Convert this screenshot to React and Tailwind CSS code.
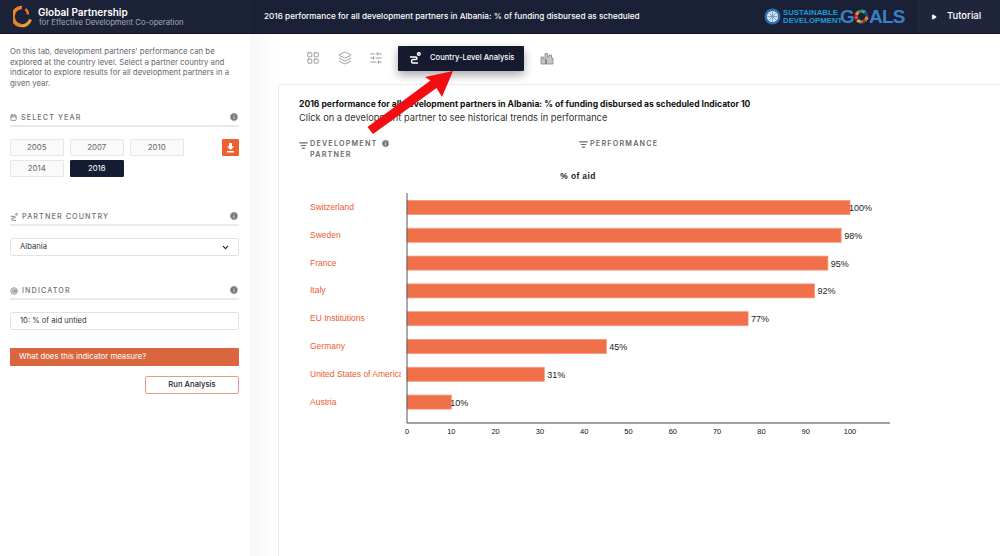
import { ChevronDown, Info, Play, Calendar, LayoutGrid, Layers, SlidersHorizontal, Target, ListFilter } from "lucide-react";

const font = { fontFamily: "Inter, 'Liberation Sans', sans-serif" };

const bars = [
  { name: "Switzerland", value: 100, label: "100%" },
  { name: "Sweden", value: 98, label: "98%" },
  { name: "France", value: 95, label: "95%" },
  { name: "Italy", value: 92, label: "92%" },
  { name: "EU Institutions", value: 77, label: "77%" },
  { name: "Germany", value: 45, label: "45%" },
  { name: "United States of America", value: 31, label: "31%" },
  { name: "Austria", value: 10, label: "10%" },
];

const ringColors = ["#e5243b", "#dda63a", "#4c9f38", "#c5192d", "#ff3a21", "#26bde2", "#fcc30b", "#a21942", "#fd6925", "#dd1367", "#fd9d24", "#bf8b2e", "#3f7e44", "#0a97d9", "#56c02b", "#00689d", "#19486a"];

function RouteIcon({ size, width = 1.5 }) {
  return (
    <svg width={size} height={size} viewBox="0 0 12 12" fill="none" stroke="currentColor" strokeWidth={width} className="shrink-0">
      <circle cx="9.8" cy="2" r="1.3" />
      <path d="M1 5 H6.5 C8.5 5 8.5 7.5 6.5 7.5 H4 C2 7.5 2 11 4 11 H9" />
    </svg>
  );
}

function SectionHead({ icon, title }) {
  return (
    <div className="flex items-center justify-between border-b-2 border-[#e8e9ec] h-[18px] pb-[1px]">
      <div className="flex items-center gap-[4px] text-[7.2px] font-medium tracking-[1.1px] text-[#6f7177] mt-[3px]">
        {icon}
        <span>{title}</span>
      </div>
      <Info size={10} fill="#777" stroke="#fff" strokeWidth={2} />
    </div>
  );
}

function YearBtn({ year, active }) {
  return (
    <button
      className={`h-[17px] w-[53.5px] rounded-[1px] text-[7.8px] ${
        active ? "bg-[#151d33] text-white border border-[#151d33]" : "bg-[#fafafa] text-[#666] border border-[#e6e6e6]"
      }`}
    >
      {year}
    </button>
  );
}

function Logo() {
  return (
    <svg width="20" height="24" viewBox="0 0 20 24" fill="none" className="shrink-0">
      <path d="M9 2.5 A8.5 9 0 0 0 8 20.5" stroke="#ee8226" strokeWidth="3.6" />
      <path d="M8 20.5 A8.5 9 0 0 0 17.5 14.5" stroke="#f0a030" strokeWidth="3" />
      <path d="M12.5 4 A6.5 7 0 0 1 15 9.5" stroke="#e8772e" strokeWidth="2.4" />
    </svg>
  );
}

function SdgLogo() {
  return (
    <div className="flex items-center" style={{ fontFamily: "'Liberation Sans', sans-serif" }}>
      <svg width="17" height="17" viewBox="0 0 17 17" className="shrink-0">
        <circle cx="8.5" cy="8.5" r="8" fill="#2f6fae" />
        <circle cx="8.5" cy="8.5" r="5.6" fill="#d5e4f2" />
        <path d="M8.5 3.5v10M3.5 8.5h10M5 5l7 7M12 5l-7 7" stroke="#5f93c4" strokeWidth="0.8" />
      </svg>
      <div className="text-[7.8px] leading-[7.5px] font-bold ml-[2px] w-[57px] whitespace-nowrap text-[#1e9ad6]">
        <div>SUSTAINABLE</div>
        <div>DEVELOPMENT</div>
      </div>
      <div className="flex items-center text-[19px] font-bold leading-none tracking-[-0.8px] text-[#3a7fc4] whitespace-nowrap w-[62px]">
        <span>G</span>
        <svg width="15" height="15" viewBox="0 0 30 30" className="shrink-0">
          {ringColors.map((c, i) => {
            const a = (i / ringColors.length) * Math.PI * 2;
            return (
              <line
                key={i}
                x1={15 + Math.cos(a) * 7.5}
                y1={15 + Math.sin(a) * 7.5}
                x2={15 + Math.cos(a) * 14}
                y2={15 + Math.sin(a) * 14}
                stroke={c}
                strokeWidth="4.4"
              />
            );
          })}
        </svg>
        <span>ALS</span>
      </div>
    </div>
  );
}

function Chart() {
  const x0 = 109;
  const scale = 4.43;
  return (
    <svg width="610" height="255" viewBox="0 0 610 255" className="block" style={{ fontFamily: "'Liberation Sans', Arial, sans-serif" }}>
      {bars.map((b, i) => {
        const cy = 22 + i * 27.8;
        return (
          <g key={b.name}>
            <text x="12" y={cy + 3} fontSize="8.5" fill="#ee5a32">{b.name}</text>
            <rect x={x0} y={cy - 6.5} width={b.value * scale} height="14" fill="#f0704a" stroke="#f5987c" strokeWidth="0.8" />
            <text
              x={x0 + b.value * scale + (b.value === 100 || b.value === 10 ? -1 : 3)}
              y={cy + 4}
              fontSize="9"
              fill="#222"
            >
              {b.label}
            </text>
          </g>
        );
      })}
      <rect x="103" y="0" width="5" height="245" fill="#fff" />
      <line x1={x0} y1="8" x2={x0} y2="238" stroke="#555" strokeWidth="1" />
      <line x1={x0} y1="238" x2="592" y2="238" stroke="#444" strokeWidth="1" />
      {[0, 10, 20, 30, 40, 50, 60, 70, 80, 90, 100].map((t) => (
        <text key={t} x={x0 + t * scale} y="249" fontSize="7.5" fill="#111" textAnchor="middle">{t}</text>
      ))}
    </svg>
  );
}

export default function App() {
  return (
    <div className="relative h-[556px] w-[1000px] overflow-hidden bg-white flex flex-col" style={font}>
      <header className="h-[34px] shrink-0 flex items-center bg-[#1a2035] border-b border-[#10141f] text-white">
        <div className="w-[250px] shrink-0 flex items-center pl-[13px] gap-[5px] bg-[#1c2339] h-full">
          <Logo />
          <div className="-mt-[1px]">
            <div className="text-[10px] font-semibold leading-[12px]">Global Partnership</div>
            <div className="text-[7.7px] leading-[9px] text-[#a6a9b4] ml-[1px] whitespace-nowrap">for Effective Development Co-operation</div>
          </div>
        </div>
        <div className="flex-1 pl-[14px] text-[8.2px] font-medium whitespace-nowrap">
          2016 performance for all development partners in Albania: % of funding disbursed as scheduled
        </div>
        <div className="mr-[15px]"><SdgLogo /></div>
        <div className="w-[83px] h-full bg-[#1f263c] flex items-center pl-[14px] gap-[10px] text-[9.5px] font-medium">
          <Play size={6} fill="#fff" stroke="#fff" />
          <span>Tutorial</span>
        </div>
      </header>

      <div className="flex flex-1 min-h-0">
        <aside className="w-[250px] shrink-0 pl-[10px] pr-[11px] pt-[12px] bg-white">
          <p className="text-[7.8px] leading-[10.5px] text-[#66686e] w-[229px]">
            On this tab, development partners' performance can be explored at the country level. Select a partner country and indicator to explore results for all development partners in a given year.
          </p>

          <div className="mt-[21px]">
            <SectionHead icon={<Calendar size={7} strokeWidth={2.5} />} title="SELECT YEAR" />
            <div className="flex justify-between items-start mt-[12px]">
              <div className="flex flex-wrap gap-x-[6.5px] gap-y-[4px] w-[180px]">
                {[2005, 2007, 2010, 2014].map((y) => <YearBtn key={y} year={y} />)}
                <YearBtn year={2016} active />
              </div>
              <button className="h-[17px] w-[17px] rounded-[1px] bg-[#ee5f32] flex items-center justify-center">
                <svg width="9" height="10" viewBox="0 0 9 10" fill="#fff">
                  <path d="M3 0h3v3.5h2L4.5 7 1 3.5h2z" />
                  <rect x="1" y="8" width="7" height="1.5" />
                </svg>
              </button>
            </div>
          </div>

          <div className="mt-[31px]">
            <SectionHead icon={<RouteIcon size={8} width={1.3} />} title="PARTNER COUNTRY" />
            <div className="mt-[12px] h-[18px] rounded-[2px] border border-[#dfe2ea] flex items-center justify-between px-[9px] text-[7.7px] text-[#33363c]">
              <span>Albania</span>
              <ChevronDown size={9} strokeWidth={3} className="-mr-[1px] text-[#222]" />
            </div>
          </div>

          <div className="mt-[26px]">
            <SectionHead icon={<Target size={8} strokeWidth={2} />} title="INDICATOR" />
            <div className="mt-[12px] h-[18px] rounded-[2px] border border-[#dfe2ea] flex items-center px-[9px] text-[7.6px] text-[#33363c]">
              10: % of aid untied
            </div>
          </div>

          <div className="mt-[18px] h-[18px] rounded-[1px] bg-[#d9663d] flex items-center px-[9px] text-[7.8px] text-white">
            What does this indicator measure?
          </div>
          <div className="flex justify-end mt-[10px]">
            <button className="w-[94px] h-[18px] rounded-[2px] border border-[#eb9a80] bg-white text-[7.7px] font-medium text-[#222]">
              Run Analysis
            </button>
          </div>
        </aside>

        <main className="flex-1 min-w-0 bg-gradient-to-r from-[#f7f7f7] to-white to-[28px] pl-[28px]">
          <div className="h-[50px] flex items-center text-[#777] pb-[2px]">
            <LayoutGrid size={14} strokeWidth={1.2} className="ml-[28px]" />
            <Layers size={14} strokeWidth={1.2} className="ml-[18px]" />
            <SlidersHorizontal size={14} strokeWidth={1.2} className="ml-[17px]" />
            <div className="ml-[15px] w-[126px] h-[25px] rounded-[1px] bg-[#151a2e] shadow-[0_4px_10px_rgba(0,0,0,0.35)] flex items-center pl-[11px] gap-[9px] text-white text-[7.6px] font-medium">
              <RouteIcon size={12} />
              <span className="whitespace-nowrap">Country-Level Analysis</span>
            </div>
            <svg width="14" height="13" viewBox="0 0 14 13" className="ml-[16px]">
              <path d="M1 12V5h2.5V7H5V1.5h2.5V5H9V3h2.5v3H13v6z" fill="#c4c4c4" stroke="#888" strokeWidth="0.8" />
              <path d="M5 7.5h2V12H5z" fill="#888" />
            </svg>
          </div>

          <section className="h-[472px] border-l border-t border-[#ececec] bg-white pl-[20px] pt-[13px]">
            <div className="text-[8.56px] font-bold leading-[13px] text-[#111] whitespace-nowrap">
              2016 performance for all development partners in Albania: % of funding disbursed as scheduled Indicator 10
            </div>
            <div className="text-[9.25px] leading-[13px] text-[#333] whitespace-nowrap">
              Click on a development partner to see historical trends in performance
            </div>

            <div className="flex mt-[14px] text-[7.2px] font-semibold tracking-[1.2px] leading-[11px] text-[#66686e]">
              <div className="w-[280px] flex items-start">
                <ListFilter size={9} strokeWidth={3} className="mt-[3px] mr-[2px]" />
                <div>
                  <div className="flex items-center gap-[3px]">
                    DEVELOPMENT
                    <Info size={9} fill="#777" stroke="#fff" strokeWidth={2} />
                  </div>
                  PARTNER
                </div>
              </div>
              <div className="flex items-start">
                <ListFilter size={9} strokeWidth={3} className="mt-[2px] mr-[2px]" />
                PERFORMANCE
              </div>
            </div>

            <div className="w-[558px] text-center text-[8.4px] font-bold tracking-[0.4px] text-[#222] mt-[10px] leading-[12px]" style={{ fontFamily: "'Liberation Sans', sans-serif" }}>
              % of aid
            </div>

            <div className="mt-[3px] -ml-[1px]">
              <Chart />
            </div>
          </section>
        </main>
      </div>

      <svg className="absolute left-0 top-0 pointer-events-none" width="1000" height="556">
        <polygon points="453,71 442,97 436.5,88 373,134 367.5,127 430.5,80.5 425,77" fill="#f10d10" />
      </svg>
    </div>
  );
}
